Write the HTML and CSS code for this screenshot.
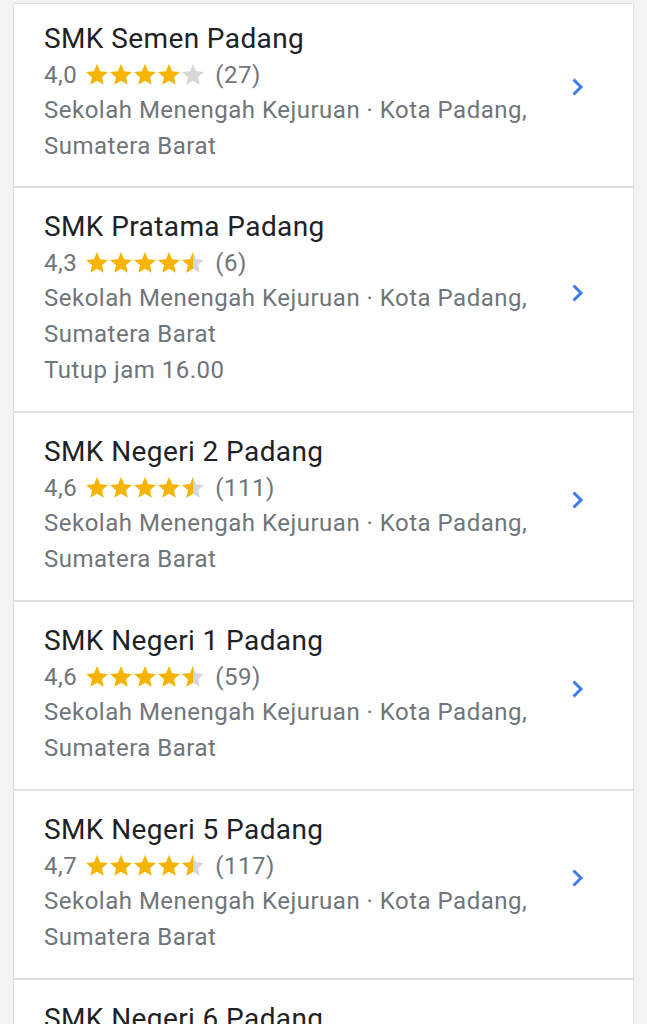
FILE: index.html
```html
<!DOCTYPE html>
<html lang="id">
<head>
  <meta charset="UTF-8" />
  <meta name="viewport" content="width=device-width, initial-scale=1" />
  <title>SMK Padang</title>
  <link rel="stylesheet" href="styles.css">
</head>
<body>

  <svg width="0" height="0" class="defs">
    <defs>
      <symbol id="star" viewBox="1 1 22 22">
        <path d="M12 17.27L18.18 21l-1.64-7.03L22 9.24l-7.19-.61L12 2 9.19 8.63 2 9.24l5.46 4.73L5.82 21z"/>
      </symbol>
      <symbol id="star-half" viewBox="1 1 22 22">
        <path fill="#d6d6d6" d="M12 17.27L18.18 21l-1.64-7.03L22 9.24l-7.19-.61L12 2 9.19 8.63 2 9.24l5.46 4.73L5.82 21z"/>
        <path fill="#f5b400" d="M12 2L9.19 8.63 2 9.24l5.46 4.73L5.82 21 12 17.27z"/>
      </symbol>
      <symbol id="chevron" viewBox="0 0 14 20">
        <path d="M2.5 2.5L10 10l-7.5 7.5" fill="none" stroke="currentColor" stroke-width="3"/>
      </symbol>
    </defs>
  </svg>

  <div class="list">

    <div class="place">
      <div class="info">
        <div class="name">SMK Semen Padang</div>
        <div class="rating">
          <span>4,0</span>
          <span class="stars">
            <svg class="on"><use href="#star"/></svg><svg class="on"><use href="#star"/></svg><svg class="on"><use href="#star"/></svg><svg class="on"><use href="#star"/></svg><svg class="off"><use href="#star"/></svg>
          </span>
          <span>(27)</span>
        </div>
        <div class="line">Sekolah Menengah Kejuruan · Kota Padang,</div>
        <div class="line">Sumatera Barat</div>
      </div>
      <svg class="go"><use href="#chevron"/></svg>
    </div>

    <div class="place">
      <div class="info">
        <div class="name">SMK Pratama Padang</div>
        <div class="rating">
          <span>4,3</span>
          <span class="stars">
            <svg class="on"><use href="#star"/></svg><svg class="on"><use href="#star"/></svg><svg class="on"><use href="#star"/></svg><svg class="on"><use href="#star"/></svg><svg><use href="#star-half"/></svg>
          </span>
          <span>(6)</span>
        </div>
        <div class="line">Sekolah Menengah Kejuruan · Kota Padang,</div>
        <div class="line">Sumatera Barat</div>
        <div class="line">Tutup jam 16.00</div>
      </div>
      <svg class="go"><use href="#chevron"/></svg>
    </div>

    <div class="place">
      <div class="info">
        <div class="name">SMK Negeri 2 Padang</div>
        <div class="rating">
          <span>4,6</span>
          <span class="stars">
            <svg class="on"><use href="#star"/></svg><svg class="on"><use href="#star"/></svg><svg class="on"><use href="#star"/></svg><svg class="on"><use href="#star"/></svg><svg><use href="#star-half"/></svg>
          </span>
          <span>(111)</span>
        </div>
        <div class="line">Sekolah Menengah Kejuruan · Kota Padang,</div>
        <div class="line">Sumatera Barat</div>
      </div>
      <svg class="go"><use href="#chevron"/></svg>
    </div>

    <div class="place">
      <div class="info">
        <div class="name">SMK Negeri 1 Padang</div>
        <div class="rating">
          <span>4,6</span>
          <span class="stars">
            <svg class="on"><use href="#star"/></svg><svg class="on"><use href="#star"/></svg><svg class="on"><use href="#star"/></svg><svg class="on"><use href="#star"/></svg><svg><use href="#star-half"/></svg>
          </span>
          <span>(59)</span>
        </div>
        <div class="line">Sekolah Menengah Kejuruan · Kota Padang,</div>
        <div class="line">Sumatera Barat</div>
      </div>
      <svg class="go"><use href="#chevron"/></svg>
    </div>

    <div class="place">
      <div class="info">
        <div class="name">SMK Negeri 5 Padang</div>
        <div class="rating">
          <span>4,7</span>
          <span class="stars">
            <svg class="on"><use href="#star"/></svg><svg class="on"><use href="#star"/></svg><svg class="on"><use href="#star"/></svg><svg class="on"><use href="#star"/></svg><svg><use href="#star-half"/></svg>
          </span>
          <span>(117)</span>
        </div>
        <div class="line">Sekolah Menengah Kejuruan · Kota Padang,</div>
        <div class="line">Sumatera Barat</div>
      </div>
      <svg class="go"><use href="#chevron"/></svg>
    </div>

    <div class="place">
      <div class="info">
        <div class="name">SMK Negeri 6 Padang</div>
      </div>
    </div>

  </div>

</body>
</html>
```

FILE: styles.css
```css
body {
  margin: 0;
  background: #f2f3f3;
  font-family: Roboto, 'Noto Sans', sans-serif;
  height: 1024px;
  overflow: hidden;
}

.defs {
  position: absolute;
}

.list {
  margin: 4px 14px 0 14px;
  background: #fff;
  box-shadow: 0 0 2px rgba(0,0,0,0.25);
}

.place {
  display: flex;
  align-items: center;
  padding: 20px 0 23px 30px;
  border-bottom: 2px solid #dfe1e2;
}

.place:first-child {
  padding-top: 16px;
  padding-bottom: 22px;
}

.info {
  flex: 1;
}

.name {
  font-size: 28px;
  line-height: 38px;
  letter-spacing: 0.4px;
  color: #202124;
}

.rating {
  display: flex;
  align-items: center;
  gap: 8px;
  font-size: 24px;
  line-height: 34px;
  letter-spacing: 0.5px;
  color: #70757a;
}

.stars {
  display: flex;
  margin-right: 2px;
}

.stars svg {
  width: 24px;
  height: 24px;
}

.stars .on {
  fill: #f5b400;
}

.stars .off {
  fill: #d6d6d6;
}

.line {
  font-size: 24px;
  line-height: 36px;
  letter-spacing: 0.5px;
  color: #70757a;
}

.go {
  width: 14px;
  height: 20px;
  margin: 0 48px 10px 0;
  color: #3f7ee8;
}
```
